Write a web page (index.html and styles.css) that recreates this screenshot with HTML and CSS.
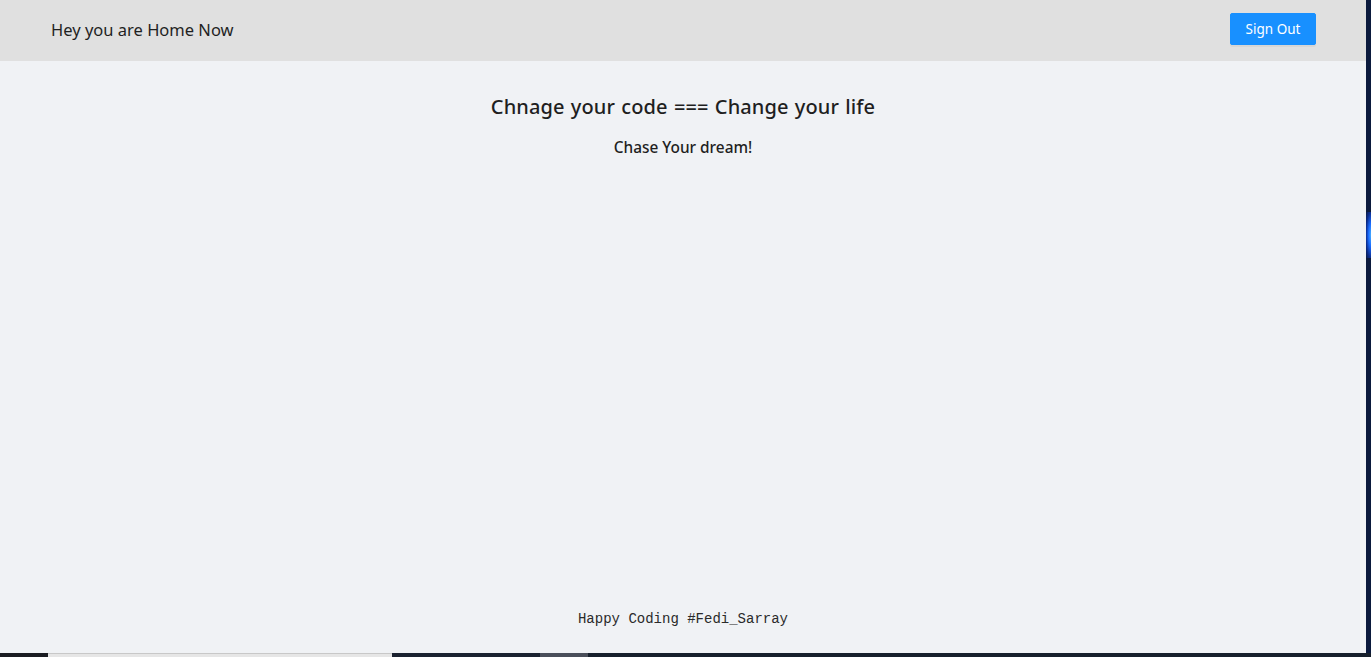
FILE: index.html
```html
<!DOCTYPE html>
<html lang="en">
<head>
<meta charset="utf-8">
<title>Home</title>
<link rel="stylesheet" href="styles.css">
</head>
<body>
<div class="screen">
  <div class="top">
    <div class="app">
      <header class="header">
        <div class="brand">Hey you are Home Now</div>
        <button class="btn">Sign Out</button>
      </header>
      <main class="content">
        <h2 class="title">Chnage your code === Change your life</h2>
        <h4 class="sub">Chase Your dream!</h4>
      </main>
      <footer class="footer">Happy Coding #Fedi_Sarray</footer>
    </div>
    <div class="edge"><div class="glow"></div></div>
  </div>
  <div class="taskbar">
    <div class="seg s1"></div>
    <div class="seg s2"></div>
    <div class="seg s3"></div>
    <div class="seg s4"></div>
    <div class="seg s5"></div>
  </div>
</div>
</body>
</html>
```
FILE: styles.css
```css
html, body {
  margin: 0;
  padding: 0;
  background: #0d1a33;
}
.screen {
  width: 1371px;
  height: 657px;
  display: flex;
  flex-direction: column;
  overflow: hidden;
}
.top {
  display: flex;
  height: 653px;
}
.app {
  width: 1366px;
  height: 653px;
  background: #f0f2f5;
  display: flex;
  flex-direction: column;
  font-family: "Segoe UI", "Noto Sans", "Open Sans", sans-serif;
  color: rgba(0, 0, 0, 0.85);
}
.header {
  height: 61px;
  background: #e0e0e0;
  display: flex;
  align-items: center;
  justify-content: space-between;
  padding: 0 50px 0 51px;
  box-sizing: border-box;
}
.brand {
  font-size: 16.5px;
  color: #1f1f1f;
  margin-top: -2px;
}
.btn {
  width: 86px;
  height: 32px;
  background: #1890ff;
  border: 1px solid #1890ff;
  border-radius: 2px;
  color: #fff;
  font-family: inherit;
  font-size: 13.5px;
  padding: 0;
  margin-top: -3px;
  box-shadow: 0 2px 0 rgba(0, 0, 0, 0.045);
}
.content {
  flex: 1;
  display: flex;
  flex-direction: column;
  align-items: center;
}
.title {
  margin: 32px 0 0;
  font-size: 20px;
  font-weight: 500;
  line-height: 1.4;
  color: #1f1f1f;
  word-spacing: 1px;
  letter-spacing: 0.1px;
}
.sub {
  margin: 16px 0 0;
  font-size: 15.4px;
  font-weight: 500;
  line-height: 1.4;
  color: #1f1f1f;
}
.footer {
  height: 42px;
  text-align: center;
  font-family: "Liberation Mono", "Courier New", monospace;
  font-size: 14px;
  color: #2a2a2a;
}
.edge {
  width: 5px;
  height: 653px;
  background: #0b1a3d;
  display: flex;
  flex-direction: column;
  padding-top: 212px;
  box-sizing: border-box;
}
.glow {
  width: 5px;
  height: 46px;
  background: radial-gradient(ellipse at 100% 50%, #4ab0ff 0%, #1a6bff 35%, #0b2d8f 70%, #0b1a3d 100%);
}
.taskbar {
  height: 4px;
  display: flex;
  background: #1a212d;
}
.seg { height: 4px; }
.s1 { width: 48px; background: #1a1c22; }
.s2 { width: 344px; background: #e6e6e6; border-top: 1px solid #c8c8c8; box-sizing: border-box; }
.s3 { width: 148px; background: #1b2230; }
.s4 { width: 48px; background: #4a4f5a; }
.s5 { flex: 1; background: #17202c; }
```
